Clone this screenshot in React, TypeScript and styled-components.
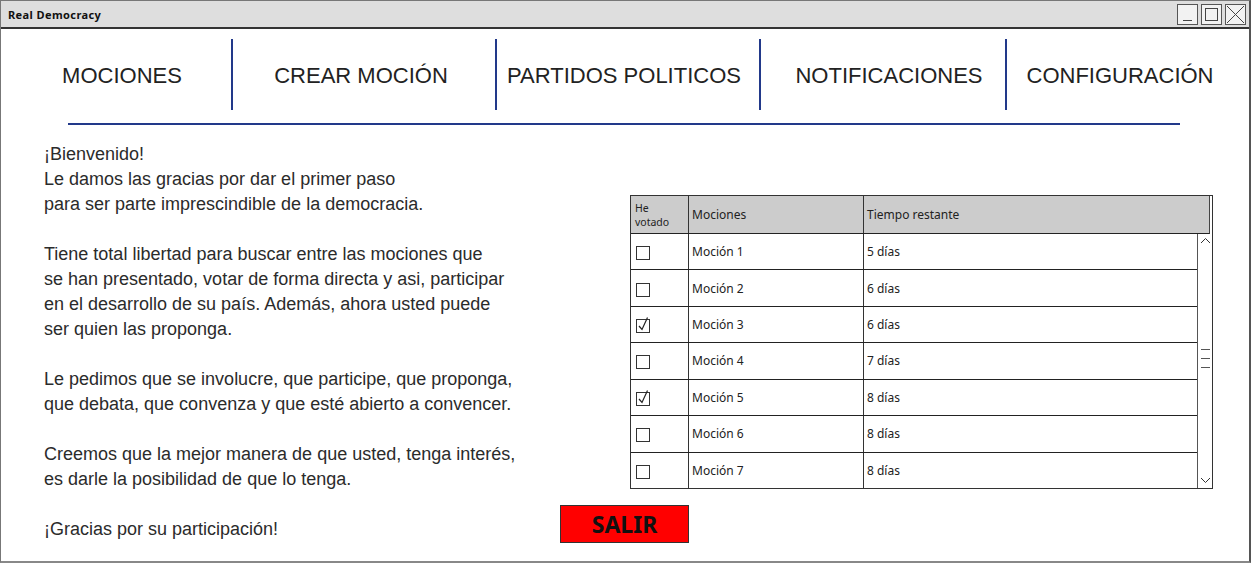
import React from "react";
import styled, { createGlobalStyle } from "styled-components";

const Global = createGlobalStyle`
  html, body { margin: 0; padding: 0; background: #fff; overflow: hidden; }
  * { box-sizing: border-box; }
`;

const SKETCH = `"Comic Sans MS", "Noto Sans", sans-serif`;

const Window = styled.div`
  width: 1251px;
  height: 563px;
  border: 1px solid #777;
  border-right: 2px solid #555;
  border-bottom: 2px solid #888;
  background: #fff;
  display: flex;
  flex-direction: column;
  overflow: hidden;
  & > * { flex-shrink: 0; }
`;

const TitleBar = styled.div`
  height: 28px;
  background: #dedede;
  border-bottom: 2px solid #333;
  display: flex;
  align-items: center;
  justify-content: space-between;
  padding: 0 3px 0 7px;
`;

const Title = styled.span`
  font-family: ${SKETCH};
  font-size: 11px;
  font-weight: bold;
  letter-spacing: 0.4px;
  color: #111;
`;

const WinButtons = styled.div`
  display: flex;
  gap: 3px;
`;

const WinButton = styled.div`
  width: 21px;
  height: 21px;
  border: 1px solid #555;
  background: #f2f2f2;
  display: flex;
  align-items: center;
  justify-content: center;
`;

const Nav = styled.nav`
  display: flex;
  align-items: center;
  height: 71px;
  margin-top: 10px;
`;

const NavItem = styled.div<{ $w: number; $shift: number; $sep: boolean }>`
  width: ${(p) => p.$w}px;
  height: 71px;
  display: flex;
  align-items: center;
  justify-content: center;
  border-left: ${(p) => (p.$sep ? "2px solid #22398a" : "none")};
  padding-top: 3px;
  padding-left: ${(p) => (p.$shift > 0 ? p.$shift * 2 : 0)}px;
  padding-right: ${(p) => (p.$shift < 0 ? -p.$shift * 2 : 0)}px;
  font-family: "Liberation Sans", Arial, sans-serif;
  font-size: 22px;
  color: #222;
  white-space: nowrap;
`;

const Rule = styled.div`
  height: 2px;
  width: 1112px;
  margin: 13px 0 0 67px;
  background: #22398a;
`;

const Content = styled.div`
  display: flex;
  padding: 17px 0 0 43px;
`;

const Intro = styled.div`
  width: 516px;
  font-family: "Liberation Sans", Arial, sans-serif;
  font-size: 18px;
  line-height: 25px;
  color: #2b2b2b;
  white-space: nowrap;
`;

const Para = styled.p`
  margin: 0 0 25px 0;
  &:last-child { margin-bottom: 0; }
`;

const Side = styled.div`
  display: flex;
  flex-direction: column;
  align-items: flex-start;
`;

const Table = styled.div`
  margin: 53px 0 0 70px;
  width: 583px;
  border: 1px solid #333;
  font-family: "Noto Sans", sans-serif;
  font-size: 12px;
  color: #222;
`;

const HeaderRow = styled.div`
  display: grid;
  grid-template-columns: 57px 175px 1fr;
  height: 38px;
  background: #cccccc;
  border-bottom: 1px solid #222;
  margin-right: 2px;
  border-right: 1px solid #444;
`;

const HeadCell = styled.div<{ $first?: boolean }>`
  display: flex;
  align-items: center;
  padding-left: ${(p) => (p.$first ? 4 : 3)}px;
  border-left: ${(p) => (p.$first ? "none" : "1px solid #333")};
  font-size: ${(p) => (p.$first ? 10.5 : 12)}px;
  line-height: ${(p) => (p.$first ? "14px" : "normal")};
`;

const Body = styled.div`
  display: flex;
  height: 254px;
`;

const Rows = styled.div`
  flex: 1;
  display: flex;
  flex-direction: column;
`;

const Row = styled.div<{ $first?: boolean }>`
  flex: 1;
  display: grid;
  grid-template-columns: 57px 175px 1fr;
  border-top: ${(p) => (p.$first ? "none" : "1px solid #222")};
`;

const Cell = styled.div<{ $first?: boolean }>`
  display: flex;
  align-items: center;
  padding-left: ${(p) => (p.$first ? 5 : 3)}px;
  border-left: ${(p) => (p.$first ? "none" : "1px solid #333")};
`;

const Scroll = styled.div`
  width: 15px;
  border-left: 1px solid #555;
  display: flex;
  flex-direction: column;
  align-items: center;
  padding: 3px 0 4px;
`;

const Thumb = styled.div`
  display: flex;
  flex-direction: column;
  gap: 8px;
  margin-top: 105px;
  & > span {
    display: block;
    width: 9px;
    height: 1px;
    background: #555;
  }
`;

const Spacer = styled.div`
  flex: 1;
`;

const Salir = styled.button`
  margin-top: 16px;
  width: 129px;
  height: 38px;
  background: #ff0000;
  border: 1px solid #333;
  font-family: "Noto Sans", sans-serif;
  font-size: 23px;
  font-weight: bold;
  color: #111;
  padding: 0;
  cursor: pointer;
`;

const Check = ({ on }: { on: boolean }) => (
  <svg width="16" height="17" viewBox="0 0 16 17">
    <rect x="0.5" y="3.5" width="13" height="13" fill="#fff" stroke="#333" />
    {on && <path d="M3 10 L6 13.5 L11.5 1.5" fill="none" stroke="#222" strokeWidth="1.2" />}
  </svg>
);

const navItems = [
  { label: "MOCIONES", w: 230, shift: 6, sep: false },
  { label: "CREAR MOCIÓN", w: 264, shift: -3, sep: true },
  { label: "PARTIDOS POLITICOS", w: 264, shift: -4, sep: true },
  { label: "NOTIFICACIONES", w: 246, shift: 6, sep: true },
  { label: "CONFIGURACIÓN", w: 228, shift: 0, sep: true },
];

const rows = [
  { name: "Moción 1", time: "5 días", voted: false },
  { name: "Moción 2", time: "6 días", voted: false },
  { name: "Moción 3", time: "6 días", voted: true },
  { name: "Moción 4", time: "7 días", voted: false },
  { name: "Moción 5", time: "8 días", voted: true },
  { name: "Moción 6", time: "8 días", voted: false },
  { name: "Moción 7", time: "8 días", voted: false },
];

export default function App() {
  return (
    <>
      <Global />
      <Window>
        <TitleBar>
          <Title>Real Democracy</Title>
          <WinButtons>
            <WinButton>
              <svg width="19" height="19" viewBox="0 0 19 19">
                <line x1="5" y1="15.5" x2="14" y2="15.5" stroke="#444" strokeWidth="1" />
              </svg>
            </WinButton>
            <WinButton>
              <svg width="19" height="19" viewBox="0 0 19 19">
                <rect x="3.5" y="3.5" width="12" height="12" fill="none" stroke="#444" />
              </svg>
            </WinButton>
            <WinButton>
              <svg width="19" height="19" viewBox="0 0 19 19">
                <path d="M1 1 L18 18 M18 1 L1 18" stroke="#444" strokeWidth="1" />
              </svg>
            </WinButton>
          </WinButtons>
        </TitleBar>

        <Nav>
          {navItems.map((n) => (
            <NavItem key={n.label} $w={n.w} $shift={n.shift} $sep={n.sep}>
              {n.label}
            </NavItem>
          ))}
        </Nav>
        <Rule />

        <Content>
          <Intro>
            <Para>
              ¡Bienvenido!
              <br />
              Le damos las gracias por dar el primer paso
              <br />
              para ser parte imprescindible de la democracia.
            </Para>
            <Para>
              Tiene total libertad para buscar entre las mociones que
              <br />
              se han presentado, votar de forma directa y asi, participar
              <br />
              en el desarrollo de su país. Además, ahora usted puede
              <br />
              ser quien las proponga.
            </Para>
            <Para>
              Le pedimos que se involucre, que participe, que proponga,
              <br />
              que debata, que convenza y que esté abierto a convencer.
            </Para>
            <Para>
              Creemos que la mejor manera de que usted, tenga interés,
              <br />
              es darle la posibilidad de que lo tenga.
            </Para>
            <Para>¡Gracias por su participación!</Para>
          </Intro>

          <Side>
            <Table>
              <HeaderRow>
                <HeadCell $first>
                  He
                  <br />
                  votado
                </HeadCell>
                <HeadCell>Mociones</HeadCell>
                <HeadCell>Tiempo restante</HeadCell>
              </HeaderRow>
              <Body>
                <Rows>
                  {rows.map((r, i) => (
                    <Row key={r.name} $first={i === 0}>
                      <Cell $first>
                        <Check on={r.voted} />
                      </Cell>
                      <Cell>{r.name}</Cell>
                      <Cell>{r.time}</Cell>
                    </Row>
                  ))}
                </Rows>
                <Scroll>
                  <svg width="11" height="7" viewBox="0 0 11 7">
                    <path d="M1 6 L5.5 1.5 L10 6" fill="none" stroke="#333" />
                  </svg>
                  <Thumb>
                    <span />
                    <span />
                    <span />
                  </Thumb>
                  <Spacer />
                  <svg width="11" height="7" viewBox="0 0 11 7">
                    <path d="M1 1 L5.5 5.5 L10 1" fill="none" stroke="#333" />
                  </svg>
                </Scroll>
              </Body>
            </Table>
            <Salir>SALIR</Salir>
          </Side>
        </Content>
      </Window>
    </>
  );
}
